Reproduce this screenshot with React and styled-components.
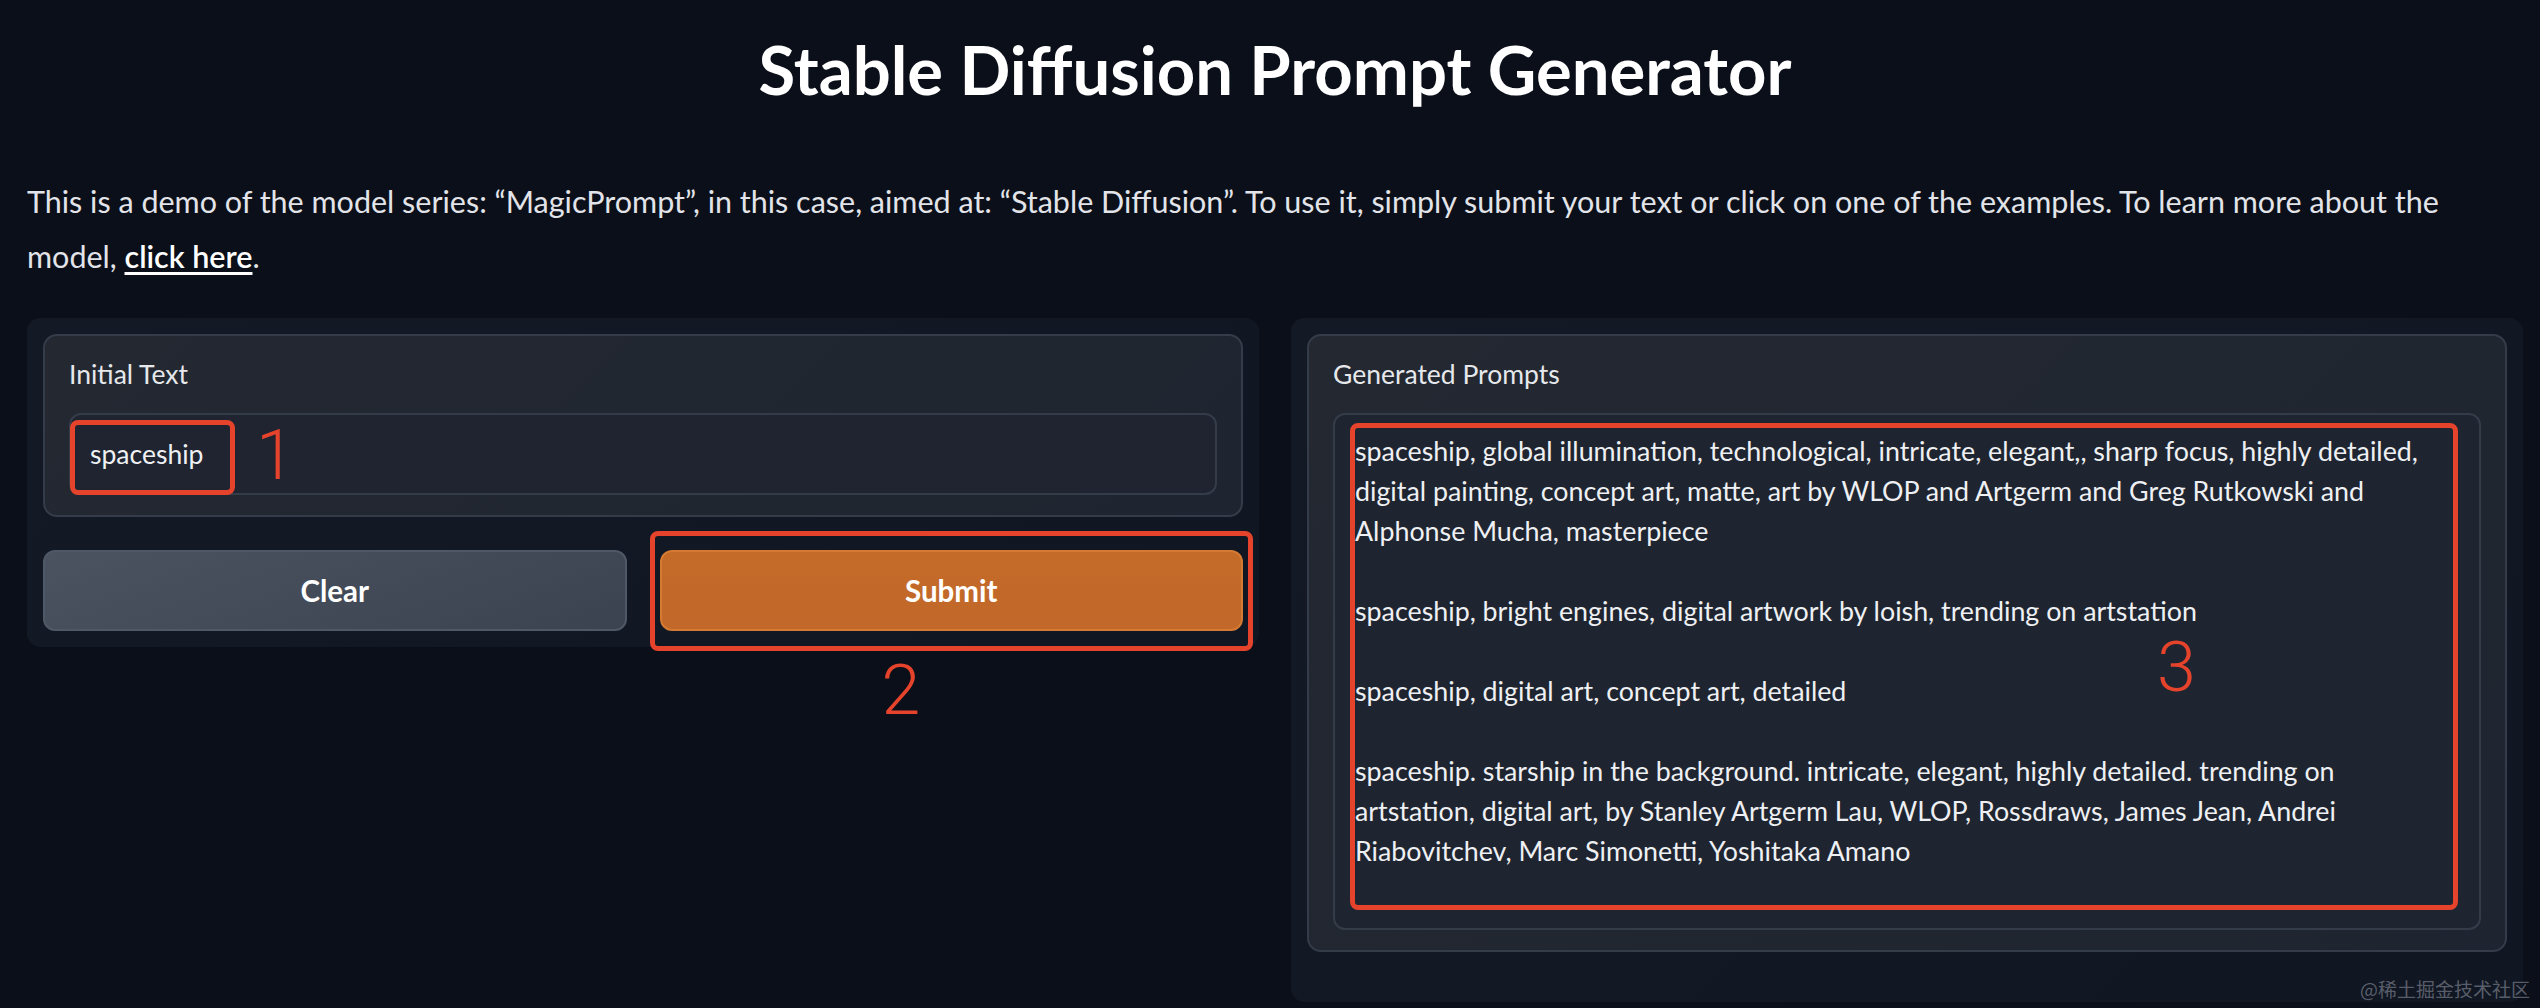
import React from 'react';
import styled, { createGlobalStyle } from 'styled-components';

const GlobalStyle = createGlobalStyle`
  html, body {
    margin: 0;
    padding: 0;
    background: #0b0f19;
  }
  body {
    font-family: 'Lato', 'Noto Sans', sans-serif;
    color: #e5e7eb;
  }
`;

const Page = styled.div`
  position: relative;
  min-height: 1008px;
  box-sizing: border-box;
  padding: 0 17px 0 27px;
  background: #0b0f19;
`;

const Title = styled.h1`
  margin: 0;
  padding-top: 28px;
  text-align: center;
  font-size: 67px;
  line-height: 82px;
  font-weight: 700;
  color: #ffffff;
`;

const Intro = styled.p`
  margin: 64px 0 34px 0;
  font-size: 30.5px;
  line-height: 55px;
  color: #e2e4e9;
  white-space: nowrap;
`;

const Link = styled.a`
  color: #ffffff;
  text-decoration: underline;
  text-underline-offset: 4px;
  font-weight: 600;
`;

const Columns = styled.div`
  display: grid;
  grid-template-columns: 1fr 1fr;
  gap: 32px;
  align-items: start;
`;

const Panel = styled.div`
  display: flex;
  flex-direction: column;
  gap: 33px;
  padding: 16px 16px ${p => p.$bottom || 16}px 16px;
  border-radius: 14px;
  background: linear-gradient(135deg, #141a25 0%, #111722 100%);
`;

const Block = styled.div`
  display: flex;
  flex-direction: column;
  padding: 20px 24px 20px 24px;
  border: 2px solid #353c49;
  border-radius: 14px;
  background: linear-gradient(135deg, #232831 0%, #1f2530 100%);
`;

const Label = styled.span`
  font-size: 26.5px;
  line-height: 36px;
  color: #e6e8ec;
  margin-bottom: 21px;
`;

const InputBox = styled.div`
  position: relative;
  height: 78px;
  padding: 0 19px;
  display: flex;
  align-items: center;
  border: 2px solid #353c49;
  border-radius: 12px;
  background: #1f2430;
  font-size: 26.5px;
  color: #eef0f3;
`;

const TextArea = styled.div`
  position: relative;
  height: 481px;
  padding: 16px 20px 16px 20px;
  border: 2px solid #353c49;
  border-radius: 12px;
  background: #1f2530;
  overflow: hidden;
`;

const Line = styled.div`
  height: 40px;
  font-size: 26.8px;
  line-height: 40px;
  color: #eef0f3;
  white-space: pre;
`;

const ButtonRow = styled.div`
  display: grid;
  grid-template-columns: 1fr 1fr;
  gap: 33px;
`;

const ButtonWrap = styled.div`
  position: relative;
`;

const Button = styled.button`
  width: 100%;
  height: 81px;
  border-radius: 12px;
  font-family: 'Lato', 'Noto Sans', sans-serif;
  font-size: 29.5px;
  font-weight: 700;
  color: #ffffff;
  cursor: pointer;
  border: 2px solid ${p => (p.$primary ? '#d57a32' : '#4f5866')};
  background: ${p =>
    p.$primary
      ? 'linear-gradient(180deg, #c46b29 0%, #c1682a 100%)'
      : 'linear-gradient(160deg, #4b5360 0%, #3b4250 100%)'};
`;

const Mark = styled.div`
  position: absolute;
  left: ${p => p.$left}px;
  top: ${p => p.$top}px;
  width: ${p => p.$width}px;
  height: ${p => p.$height}px;
  box-sizing: border-box;
  border: 5px solid #e5432b;
  border-radius: 8px;
  pointer-events: none;
`;

const Digit = styled.span`
  position: absolute;
  left: ${p => p.$left}px;
  top: ${p => p.$top}px;
  font-family: 'Roboto', 'Liberation Sans', sans-serif;
  font-weight: 300;
  font-size: 70px;
  line-height: 1;
  color: #e5432b;
  pointer-events: none;
`;

const Watermark = styled.span`
  position: absolute;
  right: 10px;
  bottom: 6px;
  font-family: 'Noto Sans CJK SC', 'Noto Sans', sans-serif;
  font-size: 19px;
  color: rgba(150, 156, 168, 0.55);
`;

const prompts = [
  'spaceship, global illumination, technological, intricate, elegant,, sharp focus, highly detailed,',
  'digital painting, concept art, matte, art by WLOP and Artgerm and Greg Rutkowski and',
  'Alphonse Mucha, masterpiece',
  '',
  'spaceship, bright engines, digital artwork by loish, trending on artstation',
  '',
  'spaceship, digital art, concept art, detailed',
  '',
  'spaceship. starship in the background. intricate, elegant, highly detailed. trending on',
  'artstation, digital art, by Stanley Artgerm Lau, WLOP, Rossdraws, James Jean, Andrei',
  'Riabovitchev, Marc Simonetti, Yoshitaka Amano',
];

export default function App() {
  return (
    <Page>
      <GlobalStyle />
      <Title>Stable Diffusion Prompt Generator</Title>
      <Intro>
        This is a demo of the model series: “MagicPrompt”, in this case, aimed at: “Stable Diffusion”. To use it, simply submit your text or click on one of the examples. To learn more about the
        <br />
        model, <Link href="#">click here</Link>.
      </Intro>

      <Columns>
        <Panel>
          <Block>
            <Label>Initial Text</Label>
            <InputBox>
              spaceship
              <Mark $left={-1} $top={5} $width={165} $height={75} />
              <Digit $left={185} $top={5}>1</Digit>
            </InputBox>
          </Block>
          <ButtonRow>
            <Button>Clear</Button>
            <ButtonWrap>
              <Button $primary>Submit</Button>
              <Mark $left={-10} $top={-19} $width={603} $height={120} />
              <Digit $left={222} $top={105}>2</Digit>
            </ButtonWrap>
          </ButtonRow>
        </Panel>

        <Panel $bottom={50}>
          <Block>
            <Label>Generated Prompts</Label>
            <TextArea>
              {prompts.map((line, i) => (
                <Line key={i}>{line}</Line>
              ))}
              <Mark $left={15} $top={8} $width={1108} $height={487} />
              <Digit $left={822} $top={217}>3</Digit>
            </TextArea>
          </Block>
        </Panel>
      </Columns>

      <Watermark>@稀土掘金技术社区</Watermark>
    </Page>
  );
}
